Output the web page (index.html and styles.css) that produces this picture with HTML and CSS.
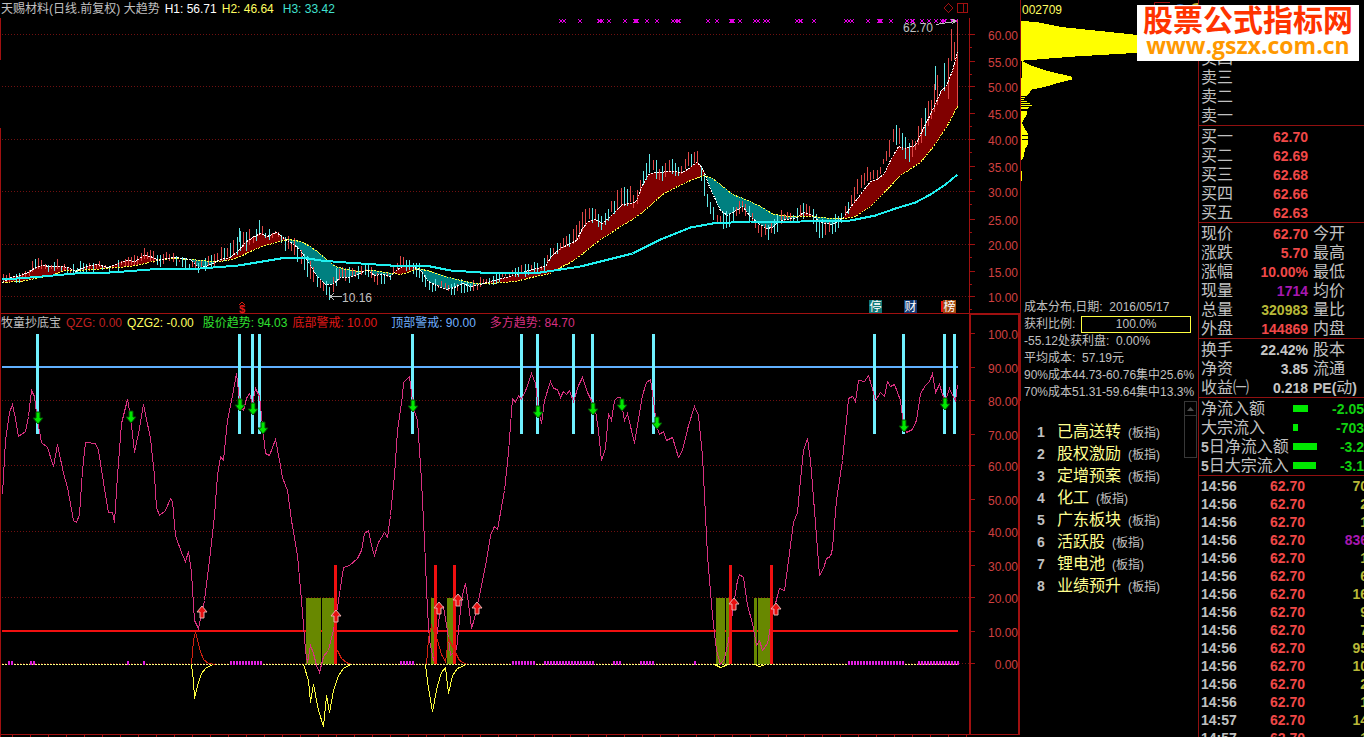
FILE: index.html
```
<!DOCTYPE html>
<html lang="zh-CN">
<head>
  <meta charset="UTF-8">
  <title>天赐材料 002709</title>
  <link rel="stylesheet" href="styles.css">
</head>
<body>
  <main class="charts">
    <div class="legend">
      <span>天赐材料(日线.前复权) 大趋势</span>
      <span class="white">H1: 56.71</span>
      <span class="yellow">H2: 46.64</span>
      <span class="cyan far">H3: 33.42</span>
    </div>
    <svg id="price" class="chart" viewBox="0 18 1020 296"></svg>
    <div class="legend">
      <span>牧童抄底宝</span>
      <span class="darkred">QZG: 0.00</span>
      <span class="yellow">QZG2: -0.00</span>
      <span class="green far">股价趋势: 94.03</span>
      <span class="red">底部警戒: 10.00</span>
      <span class="blue farther">顶部警戒: 90.00</span>
      <span class="pink farther">多方趋势: 84.70</span>
    </div>
    <svg id="trend" class="chart" viewBox="0 332 1020 405"></svg>
  </main>

  <section class="cost">
    <div class="cost-top">
      <div class="code">
        002709
        <svg width="48" height="20" viewBox="0 0 48 20">
          <path d="M4.500 12V2.500H20" fill="none" stroke="#a01010"/>
          <circle cx="30" cy="11" r="7" fill="#2060b0"/>
          <circle cx="47" cy="11" r="8" fill="#c0b020"/>
        </svg>
      </div>
      <svg class="chips" viewBox="0 20 178 278">
        <path d="M0 21 16 22 40 27 117 35 178 41V48L117 53 50 57 0 61ZM1 61 8 65 26 71 51 77V80L35 84 25 87 11 90 6 96H0ZM0 112H6V115L2 121 1 124 4 130 7 134V145L4 150 3 157 0 162ZM0 172H1V182H0Z"/>
        <path class="thin" d="M0 97.500h4M0 99.500h3M0 101.500h6M0 103.500h9M0 105.500h11M0 107.500h8M0 109.500h7"/>
        <path class="gap" d="M1 136.500h7M1 140.500h7"/>
      </svg>
      <div class="cost-info">
        <p>成本分布,日期:&nbsp; 2016/05/17</p>
        <p class="ratio">获利比例: <span class="ratio-box">100.0%</span></p>
        <p>-55.12处获利盘:&nbsp; 0.00%</p>
        <p>平均成本:&nbsp; 57.19元</p>
        <p>90%成本44.73-60.76集中25.6%</p>
        <p>70%成本51.31-59.64集中13.3%</p>
      </div>
    </div>
    <div class="boards">
      <ol>
        <li><b>1</b><span class="name">已高送转</span><small>(板指)</small></li>
        <li><b>2</b><span class="name">股权激励</span><small>(板指)</small></li>
        <li><b>3</b><span class="name">定增预案</span><small>(板指)</small></li>
        <li><b>4</b><span class="name">化工</span><small>(板指)</small></li>
        <li><b>5</b><span class="name">广东板块</span><small>(板指)</small></li>
        <li><b>6</b><span class="name">活跃股</span><small>(板指)</small></li>
        <li><b>7</b><span class="name">锂电池</span><small>(板指)</small></li>
        <li><b>8</b><span class="name">业绩预升</span><small>(板指)</small></li>
      </ol>
      <div class="scroll">
        <button type="button" aria-label="向上"><svg width="7" height="4" viewBox="0 0 7 4"><path d="M0 4 3.500 0 7 4Z" fill="#505050"/></svg></button>
      </div>
    </div>
  </section>

  <aside class="quote">
    <div class="quote-head"></div>
    <table class="sell">
      <tr><td>卖四</td></tr>
      <tr><td>卖三</td></tr>
      <tr><td>卖二</td></tr>
      <tr><td>卖一</td></tr>
    </table>
    <div class="block">
      <table>
        <tr><td>买一</td><td class="num">62.70</td><td></td></tr>
        <tr><td>买二</td><td class="num">62.69</td><td></td></tr>
        <tr><td>买三</td><td class="num">62.68</td><td></td></tr>
        <tr><td>买四</td><td class="num">62.66</td><td></td></tr>
        <tr><td>买五</td><td class="num">62.63</td><td></td></tr>
      </table>
    </div>
    <div class="block">
      <table>
        <tr><td>现价</td><td class="num">62.70</td><td>今开</td></tr>
        <tr><td>涨跌</td><td class="num">5.70</td><td>最高</td></tr>
        <tr><td>涨幅</td><td class="num">10.00%</td><td>最低</td></tr>
        <tr><td>现量</td><td class="num purple">1714</td><td>均价</td></tr>
        <tr><td>总量</td><td class="num olive">320983</td><td>量比</td></tr>
        <tr><td>外盘</td><td class="num">144869</td><td>内盘</td></tr>
      </table>
    </div>
    <div class="block">
      <table>
        <tr><td>换手</td><td class="num gray">22.42%</td><td>股本</td></tr>
        <tr><td>净资</td><td class="num gray">3.85</td><td>流通</td></tr>
        <tr><td>收益㈠</td><td class="num gray">0.218</td><td><b>PE(</b>动<b>)</b></td></tr>
      </table>
    </div>
    <div class="block">
      <table class="flow">
        <tr><td>净流入额</td><td><i style="width:15px"></i></td><td class="num">-2.05</td></tr>
        <tr><td>大宗流入</td><td><i style="width:5px"></i></td><td class="num">-703</td></tr>
        <tr><td><b>5</b>日净流入额</td><td><i style="width:24px"></i></td><td class="num">-3.2</td></tr>
        <tr><td><b>5</b>日大宗流入</td><td><i style="width:23px"></i></td><td class="num">-3.1</td></tr>
      </table>
    </div>
    <div class="block">
      <table class="ticks" id="ticks"></table>
    </div>
  </aside>

  <div class="brand">
    <div class="brand-name">股票公式指标网</div>
    <div class="brand-url">www.gszx.com.cn</div>
  </div>
  <script src="chart.js"></script>
</body>
</html>
```
FILE: styles.css
```
* { box-sizing: border-box; }
body {
  margin: 0;
  height: 100vh;
  overflow: hidden;
  position: relative;
  display: grid;
  grid-template-columns: 1fr 178px 166px;
  background: #000;
  color: #c0c0c0;
  font-family: "Liberation Sans", "Noto Sans CJK SC", sans-serif;
  font-size: 12px;
}
p, ol { margin: 0; padding: 0; }

/* charts */
.charts { min-width: 0; }
.legend {
  display: flex;
  gap: 5px;
  height: 18px;
  line-height: 19px;
  padding-left: 1px;
  white-space: nowrap;
}
.far { margin-left: 4px; }
.farther { margin-left: 9px; }
.white { color: #fff; }
.yellow { color: #ffff60; }
.cyan { color: #40e0d0; }
.darkred { color: #c02020; }
.red { color: #e01818; }
.green { color: #30e030; }
.blue { color: #70b0ff; }
.pink { color: #d83080; }
.chart { display: block; width: 100%; height: auto; overflow: visible; }
.chart path { fill: none; shape-rendering: crispEdges; }
.chart .frame { stroke: #a01010; }
.chart .frame-bold { stroke: #a01010; stroke-width: 2; }
.chart .grid { stroke: #701010; stroke-dasharray: 1 2; }
.chart .area-up { stroke: #800000; }
.chart .area-down { stroke: #008080; }
.chart .bar-up { stroke: #e04848; }
.chart .bar-down { stroke: #60e8e8; }
.chart .h1 { stroke: #fff; stroke-dasharray: 2 1; }
.chart .h2 { stroke: #ffff40; stroke-dasharray: 2 1; }
.chart .h3 { stroke: #20f0f0; stroke-width: 2; }
.chart .cross { stroke: #e000e0; }
.chart .note { stroke: #c0c0c0; }
.chart .axis { fill: #d04040; text-anchor: end; }
.chart .label { fill: #c0c0c0; }
.chart .badge { fill: #fff; text-anchor: middle; }
.chart .dollar { fill: #e01818; font-size: 11px; font-weight: bold; text-anchor: middle; }
.chart .line-pink { stroke: #d83080; }
.chart .line-yellow { stroke: #ffff40; }
.chart .line-red { stroke: #d02010; }
.chart .zero { stroke: #ffff80; stroke-dasharray: 2 1; }
.chart .top-limit { stroke: #60b0ff; stroke-width: 2; }
.chart .low-limit { stroke: #f01010; stroke-width: 2; }
.chart .sell-bar { stroke: #70f0ff; stroke-width: 3; }
.chart .buy-bar { stroke: #f01010; stroke-width: 3; }
.chart .zone { fill: #688800; }
.chart .tick { stroke: #e020e0; stroke-width: 2; }
.chart .arrow-down { fill: #00e800; stroke: #005000; }
.chart .arrow-up { fill: #e81010; stroke: #e8b0b0; }

/* cost distribution */
.cost { display: flex; flex-direction: column; min-height: 0; }
.cost-top { border-left: 1px solid #901010; }
.code {
  display: flex;
  justify-content: space-between;
  height: 20px;
  line-height: 20px;
  padding-left: 1px;
  color: #ffff60;
}
.chips { display: block; width: 100%; height: auto; fill: #ff0; shape-rendering: crispEdges; }
.chips .thin { stroke: #ff0; }
.chips .gap { stroke: #000; }
.cost-info { padding: 3px 0 0 3px; white-space: nowrap; }
.cost-info p { height: 17px; line-height: 17px; }
.cost-info .ratio { display: flex; gap: 6px; padding-right: 7px; }
.ratio-box { flex: 1; border: 1px solid #ffff40; text-align: center; line-height: 15px; }
.boards { display: flex; justify-content: space-between; }
.boards ol { list-style: none; padding: 20px 0 0 17px; }
.boards li { height: 22px; line-height: 22px; white-space: nowrap; }
.boards b { display: inline-block; width: 20px; font-size: 14px; }
.boards .name { color: #ffff90; font-size: 16px; margin-right: 7px; }
.boards small { font-size: 12px; }
.scroll { width: 13px; height: 57px; border: 1px solid #383838; margin-right: 1px; }
.scroll button {
  display: flex;
  align-items: center;
  justify-content: center;
  width: 100%;
  height: 14px;
  padding: 0;
  border: 0;
  border-bottom: 1px solid #383838;
  background: #000;
}

/* quote */
.quote { border-left: 1px solid #901010; overflow: hidden; }
.quote-head { height: 49px; }
.block { border-top: 1px solid #901010; padding-top: 1px; }
.quote table { width: 100%; border-collapse: collapse; table-layout: fixed; font-size: 16px; }
.quote tr { height: 19px; }
.quote td { padding: 0; line-height: 18px; height: 19px; white-space: nowrap; }
.quote td:first-child { width: 56px; padding-left: 2px; }
.quote td:nth-child(2) { width: 54px; padding-right: 1px; }
.quote td:nth-child(3) { padding-left: 4px; }
.quote b { font-size: 14px; line-height: 14px; }
.quote .num { font-size: 14px; font-weight: bold; text-align: right; color: #f04848; }
.quote .purple { color: #a818b0; }
.quote .olive { color: #b8b838; }
.quote .gray { color: #c8c8c8; }
.quote .flow td:first-child { width: 94px; }
.quote .flow td:nth-child(2) { width: 26px; }
.quote .flow .num { color: #10d010; padding: 0; }
.flow i { display: block; height: 7px; background: #00e800; }
.quote .ticks { width: calc(100% + 4px); font-size: 14px; font-weight: bold; }
.quote .ticks tr { height: 18px; }
.quote .ticks td { line-height: 18px; height: 18px; }
.quote .ticks td:nth-child(2) { width: 51px; }

/* site banner over the quote header */
.brand {
  position: absolute;
  top: 5px;
  right: 5px;
  width: 222px;
  height: 56px;
  background: #fff;
  text-align: center;
  font-weight: bold;
  white-space: nowrap;
}
.brand-name { color: #ff3300; font-size: 30px; line-height: 32px; }
.brand-url { color: #ff9900; font-family: "Open Sans", sans-serif; font-size: 23px; line-height: 16px; }
```
FILE: chart.js
```
const NS = 'http://www.w3.org/2000/svg';
const price = document.getElementById('price');
const trend = document.getElementById('trend');

function add(svg, tag, attrs, text) {
  const el = document.createElementNS(NS, tag);
  for (const k in attrs) el.setAttribute(k, attrs[k]);
  if (text) el.textContent = text;
  svg.appendChild(el);
}
function path(svg, cls, d) { add(svg, 'path', { class: cls, d: d }); }
// "x,y x,y" -> [[x, y], ...]
function pts(s) { return s.trim().split(/\s+/).map(p => p.split(',').map(Number)); }
function line(svg, cls, s) { path(svg, cls, 'M' + pts(s).map(p => (p[0] + 0.5) + ' ' + (p[1] + 0.5)).join('L')); }
function at(list, x, col) {
  let i = 1;
  while (i < list.length - 1 && list[i][0] < x) i++;
  const a = list[i - 1], b = list[i];
  return a[col] + (b[col] - a[col]) * (x - a[0]) / (b[0] - a[0]);
}

// ---- price chart ----
const H1 = '2,282 10,277 20,275 28,272 35,267 42,265 50,266 60,266 68,267 75,271 83,267 90,265 97,264 107,267 113,265 120,262 127,260 135,261 143,255 150,256 158,260 165,258 175,257 190,259 198,267 205,266 212,263 220,259 230,257 238,250 245,242 252,237 260,233 267,236 276,232 285,239 292,243 300,250 308,262 316,275 325,284 332,284 340,277 348,277 358,274 366,269 374,275 382,274 390,276 396,270 403,265 412,266 420,270 428,281 436,285 446,289 454,287 462,283 470,286 480,284 493,280 510,276 528,270 545,266 551,256 560,248 570,243 576,240 582,228 588,221 595,219 602,223 608,218 615,211 622,204 635,202 642,185 648,174 655,172 672,171 682,172 690,167 696,162 700,165 704,172 708,184 714,197 720,210 727,215 734,211 742,206 750,216 758,223 766,228 772,227 778,221 785,219 795,218 803,212 812,215 820,222 832,224 843,217 850,207 857,198 870,181 877,179 884,173 890,160 898,146 904,148 915,145 921,132 930,114 937,99 941,90 946,86 952,70 957,52';
const H2 = '2,282 20,281 30,279 50,275 65,270 75,270 95,269 115,267 130,266 145,263 160,259 175,258 190,259 210,261 220,261 232,259 242,255 252,250 262,246 275,242 288,239 300,241 308,245 318,252 326,259 335,266 345,269 358,271 372,270 385,272 400,274 410,271 418,268 430,271 445,276 460,280 475,283 490,283 515,281 535,276 550,273 560,267 570,262 580,255 590,247 600,239 610,233 620,226 632,219 642,212 652,203 662,194 675,187 690,180 704,175 712,178 720,184 732,194 745,199 760,206 773,214 790,216 812,216 830,218 845,218 855,216 870,206 877,199 900,175 920,162 933,146 947,125 957,106';
const H3 = '2,279 30,277 75,273 110,272 150,269 200,268 238,265 262,261 280,258 302,257 320,260 345,262 390,265 425,265 450,270 480,272 540,272 580,266 600,261 632,253 660,239 690,227 712,223 750,221 800,221 850,220 875,215 895,208 915,202 930,194 945,184 957,174';
// x, top, bottom of the traded range
const RANGE = pts('3,276,284 15,273,282 28,268,277 35,258,268 48,263,271 58,260,271 70,267,274 82,261,271 95,261,270 112,266,270 127,254,266 138,256,267 143,247,258 152,250,264 158,257,265 168,252,262 180,257,264 197,262,272 212,256,266 222,248,260 235,240,255 240,228,248 247,230,250 255,233,240 259,220,233 266,232,240 276,228,236 285,235,248 295,240,258 303,252,268 312,265,283 322,280,292 330,283,299 338,265,280 348,266,282 357,268,277 367,264,273 375,272,285 390,272,279 400,257,268 410,258,270 420,265,278 428,280,291 438,281,290 452,282,294 462,280,290 472,282,292 490,274,283 510,270,277 532,263,272 542,262,272 550,250,258 560,241,250 570,235,246 580,218,240 587,204,220 595,210,222 602,214,229 610,204,215 620,185,205 630,188,203 635,195,215 642,170,185 647,158,175 651,152,168 658,166,182 672,160,172 680,165,178 690,150,166 697,152,165 704,172,193 708,198,209 717,212,227 730,212,226 740,198,212 750,206,222 760,228,238 768,223,238 775,215,232 785,210,222 795,211,220 805,202,216 812,205,220 820,220,240 833,218,232 845,205,217 855,182,200 867,167,180 878,172,180 885,155,162 890,137,155 894,124,140 902,130,150 907,143,162 915,140,152 920,118,145 930,99,122 937,75,108 942,63,95 947,67,92 952,40,75 957,20,55');

path(price, 'frame', 'M.5 18V60M.5 128V314M969.5 18V314M0 313.500H970M1020.500 18V314');
path(price, 'frame-bold', 'M970 314H1020');
path(price, 'frame', 'M948.500 3.500l4.500 4.500l-4.500 4.500l-4.500 -4.500ZM957.500 3.500h10v9h-10ZM963.500 3V13');
const priceAxis = [[35, '60.00'], [62, '55.00'], [87, '50.00'], [114, '45.00'], [140, '40.00'], [167, '35.00'], [192, '30.00'], [220, '25.00'], [245, '20.00'], [272, '15.00'], [297, '10.00']];
priceAxis.forEach(([y, t], i) => {
  if (i % 2 === 0) path(price, 'grid', `M2 ${y - 0.5}H969`);
  path(price, 'frame', `M970 ${y - 0.5}h5M970 ${y + 12.5}h2`);
  add(price, 'text', { class: 'axis', x: 1018, y: y + 5 }, t);
});

const h1 = pts(H1), h2 = pts(H2);
let up = '', down = '';
for (let x = 3; x < 958; x++) {
  const a = at(h1, x, 1), b = at(h2, x, 1);
  const seg = `M${x + 0.5} ${a.toFixed(1)}V${b.toFixed(1)}`;
  if (a < b) up += seg; else down += seg;
}
path(price, 'area-up', up);
path(price, 'area-down', down);

let red = '', blue = '';
for (let i = 0; i < 293; i++) {
  const x = Math.round(3 + i * 3.2);
  if (x > 950) break;
  const t = at(RANGE, x, 1), b = at(RANGE, x, 2);
  const r = Math.abs(Math.sin(i * 12.9) * 43.7) % 1, q = Math.abs(Math.sin(i * 7.3) * 91.1) % 1;
  const seg = `M${x + 0.5} ${Math.round(t + (r - 0.3) * 6)}V${Math.round(b + (q - 0.5) * 6)}`;
  const rising = at(h1, Math.min(x + 4, 957), 1) < at(h1, Math.max(x - 4, 2), 1);
  if (q < (rising ? 0.65 : 0.35)) red += seg; else blue += seg;
}
red += 'M951.500 29V61M954.500 42V60M957.500 20V106M948.500 58V99';
path(price, 'bar-up', red);
path(price, 'bar-down', blue + 'M935.500 66V90M944.500 63V91M259.500 220V233M239.500 228V242');
line(price, 'h2', H2);
line(price, 'h1', H1);
line(price, 'h3', H3);

[561, 564, 580, 599, 600, 602, 609, 625, 635, 636, 637, 647, 657, 673, 676, 678, 679, 708, 717, 731, 732, 733, 740, 755, 758, 765, 768, 797, 800, 801, 814, 846, 849, 852, 868, 879, 880, 881, 891, 907, 912, 913, 922, 929, 936, 942, 944, 945, 952, 956]
  .forEach(x => path(price, 'cross', `M${x - 2} 19l4 4m0 -4l-4 4`));
path(price, 'note', 'M936 24.500L955 21.500M951 19l5 2l-4 3M330 296.500H342M334 293l-4 3.500l4 3.500');
add(price, 'text', { class: 'label', x: 903, y: 32 }, '62.70');
add(price, 'text', { class: 'label', x: 342, y: 302 }, '10.16');
add(price, 'text', { class: 'dollar', x: 242, y: 313 }, '$');
path(price, 'line-red', 'M239 305l3 -3l3 3');
[[875, '停', '#107878'], [910, '财', '#103870'], [949, '榜', '#a04810']].forEach(([x, t, c]) => {
  add(price, 'rect', { x: x - 6, y: 300, width: 13, height: 13, fill: c });
  add(price, 'text', { class: 'badge', x: x + 0.5, y: 311 }, t);
});
path(price, 'low-limit', 'M942 301V312');

// ---- trend chart ----
path(trend, 'frame', 'M.5 314V737M0 734.500H1020');
path(trend, 'frame-bold', 'M970 314V734M1019 314V734');
for (let x = 12; x < 970; x += 18) path(trend, 'frame', `M${x + 0.5} 735v2`);
[[334, '100.0'], [368, '90.00'], [401, '80.00'], [435, '70.00'], [466, '60.00'], [500, '50.00'], [532, '40.00'], [566, '30.00'], [598, '20.00'], [632, '10.00'], [664, '0.00']].forEach(([y, t], i) => {
  if (i % 2 === 0 && i > 0) path(trend, 'grid', `M2 ${y - 0.5}H969`);
  path(trend, 'frame', `M970 ${y - 0.5}h5`);
  add(trend, 'text', { class: 'axis', x: 1018, y: y + 5 }, t);
});
path(trend, 'low-limit', 'M2 631H958');
[[306, 15], [322, 13], [431, 3], [447, 6], [716, 9], [726, 4], [754, 3], [758, 12]].forEach(z =>
  add(trend, 'rect', { class: 'zone', x: z[0], y: 598, width: z[1], height: 66 }));
path(trend, 'zero', 'M2 664.500H958');
path(trend, 'top-limit', 'M2 367H958');
path(trend, 'sell-bar', [37, 239, 252, 259, 412, 521, 537, 573, 592, 653, 874, 903, 944, 954].map(x => `M${x + 0.5} 334V434`).join(''));
line(trend, 'line-pink', '2,494 5,440 9,412 12,404 15,418 18,436 25,431 28,416 31,390 34,396 37,420 41,442 47,447 53,466 57,444 63,473 67,487 73,520 76,522 79,514 82,470 85,442 95,443 98,450 103,482 108,512 112,512 114,522 117,475 121,423 127,399 130,416 134,452 139,428 143,404 150,438 154,475 156,507 159,515 165,510 170,498 172,501 175,535 181,552 185,561 188,551 191,572 194,620 198,628 204,600 209,560 214,515 217,475 220,456 223,460 227,420 232,395 236,373 240,408 243,410 246,398 249,393 252,404 255,388 259,396 262,425 265,453 269,455 275,439 279,460 282,477 287,490 291,520 297,555 301,600 305,650 307,662 310,645 313,653 316,665 319,672 323,656 328,650 331,638 335,620 338,600 343,567 349,565 357,558 361,550 364,533 368,530 371,545 374,555 378,542 384,532 387,537 390,515 394,475 397,430 402,395 403,382 409,376 413,408 417,420 421,480 424,540 427,610 429,640 433,660 437,630 440,608 443,606 447,630 450,655 456,650 460,610 462,594 465,583 468,603 471,628 474,618 479,595 484,570 486,560 490,535 494,526 497,529 504,490 508,452 512,398 515,402 518,395 521,399 526,388 531,373 535,383 538,410 541,423 544,400 550,381 553,388 557,389 560,397 563,391 566,394 569,390 573,401 578,385 582,377 587,392 591,400 595,410 598,430 601,460 605,448 608,413 611,420 614,400 617,397 620,397 624,420 627,413 631,430 634,443 637,425 642,395 646,382 650,379 653,400 656,425 659,434 663,431 666,440 672,437 678,457 682,450 688,425 694,406 698,415 702,455 707,555 712,615 716,650 720,664 724,658 728,640 733,605 737,580 739,574 743,577 747,605 752,623 756,645 759,640 762,650 767,643 772,615 777,595 779,588 784,590 788,560 793,522 797,512 799,490 803,450 807,438 810,460 814,510 819,575 823,568 826,558 830,556 832,548 836,500 842,460 846,420 848,398 852,396 855,401 858,380 864,381 868,375 871,385 875,400 880,392 884,396 887,381 890,386 894,384 900,400 903,425 906,432 912,429 916,420 920,393 925,385 929,381 932,373 935,392 939,384 942,394 945,400 949,388 952,395 955,400 957,385');
path(trend, 'buy-bar', [335, 435, 454, 730, 771].map(x => `M${x + 0.5} 565V664`).join(''));
line(trend, 'line-red', '191,664 193,640 195,631 199,648 203,659 208,663 215,664');
line(trend, 'line-red', '337,650 341,658 346,662 350,664');
line(trend, 'line-red', '426,664 428,638 431,625 437,640 441,654 445,661 448,638 455,652 459,660 466,664');
line(trend, 'line-yellow', '191,664 193,680 194,698 197,685 201,673 206,667 213,664');
line(trend, 'line-yellow', '303,664 308,680 310,702 313,684 318,710 323,726 326,695 329,712 333,690 338,675 343,668 350,664');
line(trend, 'line-yellow', '425,664 428,688 432,711 437,685 441,672 445,667 448,693 452,675 457,668 466,664');
line(trend, 'line-yellow', '714,664 720,667 728,664');
line(trend, 'line-yellow', '754,664 759,666 765,664');
[[8, 13], [30, 35], [127, 127], [143, 143], [230, 260], [400, 413], [512, 535], [544, 592], [613, 621], [640, 654], [694, 694], [848, 902], [918, 957]].forEach(([a, b]) => {
  for (let x = a; x <= b; x += 3) path(trend, 'tick', `M${x + 1} 661v4`);
});
[[37, 418], [130, 417], [239, 405], [252, 409], [262, 428], [412, 406], [537, 412], [592, 409], [621, 405], [656, 423], [903, 426], [944, 404]].forEach(([x, y]) =>
  add(trend, 'polygon', { class: 'arrow-down', points: `${x - 1},${y - 6} ${x + 3},${y - 6} ${x + 3},${y} ${x + 6},${y} ${x + 1},${y + 6} ${x - 4},${y} ${x - 1},${y}` }));
[[201, 612], [335, 616], [438, 608], [457, 600], [476, 608], [733, 604], [775, 609]].forEach(([x, y]) =>
  add(trend, 'polygon', { class: 'arrow-up', points: `${x - 1},${y + 6} ${x + 3},${y + 6} ${x + 3},${y} ${x + 6},${y} ${x + 1},${y - 6} ${x - 4},${y} ${x - 1},${y}` }));

// ---- tick list ----
const vols = ['70', '2', '1', '836', '1', '6', '16', '9', '7', '95', '10', '2', '1', '14', '1'];
document.getElementById('ticks').innerHTML = vols.map((v, i) =>
  `<tr><td>${i < 13 ? '14:56' : '14:57'}</td><td class="num">62.70</td><td class="num ${v.length > 2 ? 'purple' : 'olive'}">${v}</td></tr>`).join('');
```
